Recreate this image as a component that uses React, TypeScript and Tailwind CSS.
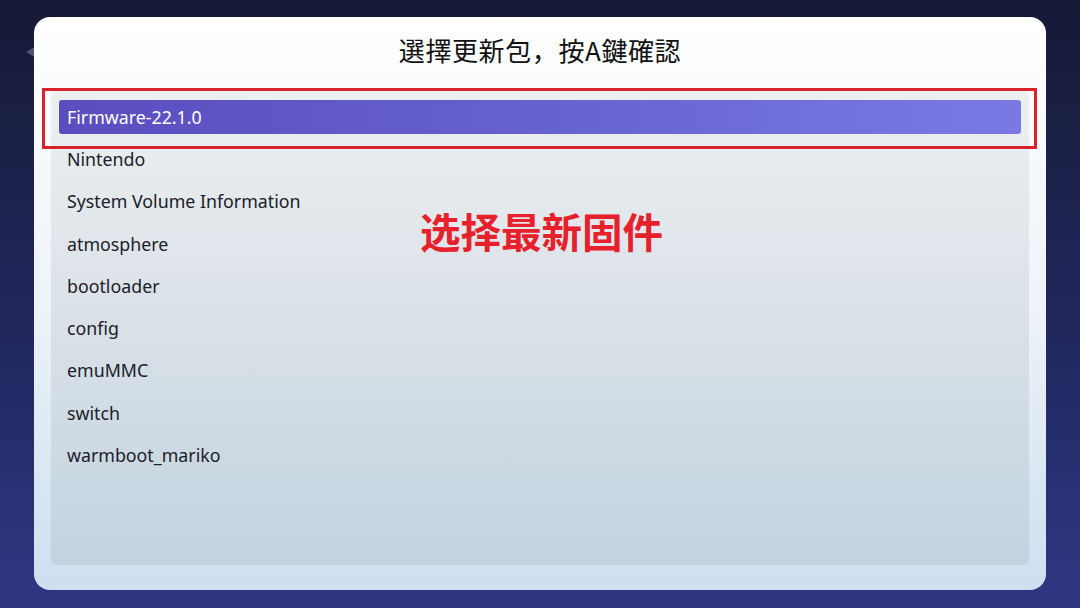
import React from "react";

const items = [
  "Firmware-22.1.0",
  "Nintendo",
  "System Volume Information",
  "atmosphere",
  "bootloader",
  "config",
  "emuMMC",
  "switch",
  "warmboot_mariko",
];

export default function App() {
  return (
    <div className="relative w-[1080px] h-[608px] overflow-hidden bg-gradient-to-b from-[#161a36] via-[#20265a] to-[#2f3784] pt-[17px] pl-[34px] font-['Noto_Sans',sans-serif]">
      {/* little sprite peeking out behind the card */}
      <svg className="absolute left-[25px] top-[44px]" width="12" height="16" viewBox="0 0 12 16">
        <path d="M1 8 L11 2 L11 14 Z" fill="#5c6180" opacity="0.8" />
      </svg>

      <div className="relative w-[1012px] h-[573px] rounded-[16px] bg-gradient-to-b from-[#ffffff] via-[#eef3f8] to-[#cddff0] px-[17px] flex flex-col">
        <div className="h-[73px] flex items-center justify-center pb-[9px]">
          <h1 className="text-[26px] tracking-[0.6px] text-[#111] font-['Noto_Sans_CJK_JP','Noto_Sans_CJK_TC',sans-serif]">
            選擇更新包，按A鍵確認
          </h1>
        </div>

        <div className="h-[475px] rounded-[7px] bg-gradient-to-b from-[#edf0f1] via-[#d9e1e7] to-[#c2d3e0] pt-[10px] px-[8px] flex flex-col gap-[8.3px]">
          {items.map((name, i) => (
            <div
              key={name}
              className={
                i === 0
                  ? "h-[34px] shrink-0 rounded-[3px] bg-gradient-to-r from-[#5a4dbf] via-[#6662cf] to-[#7b7ae3] pl-[8px] flex items-center text-[17.8px] text-white"
                  : "h-[34px] shrink-0 pl-[8px] flex items-center text-[17.8px] text-[#1b2029]"
              }
            >
              {name}
            </div>
          ))}
        </div>

        {/* annotation overlay */}
        <div className="absolute left-[8px] top-[71px] w-[995px] h-[61px] border-[3px] border-[#d8232e]" />
        <div className="absolute left-[386px] top-[194px] text-[40.5px] leading-[40px] font-bold text-[#e6212b] font-['Noto_Sans_CJK_SC',sans-serif]">
          选择最新固件
        </div>
      </div>
    </div>
  );
}
